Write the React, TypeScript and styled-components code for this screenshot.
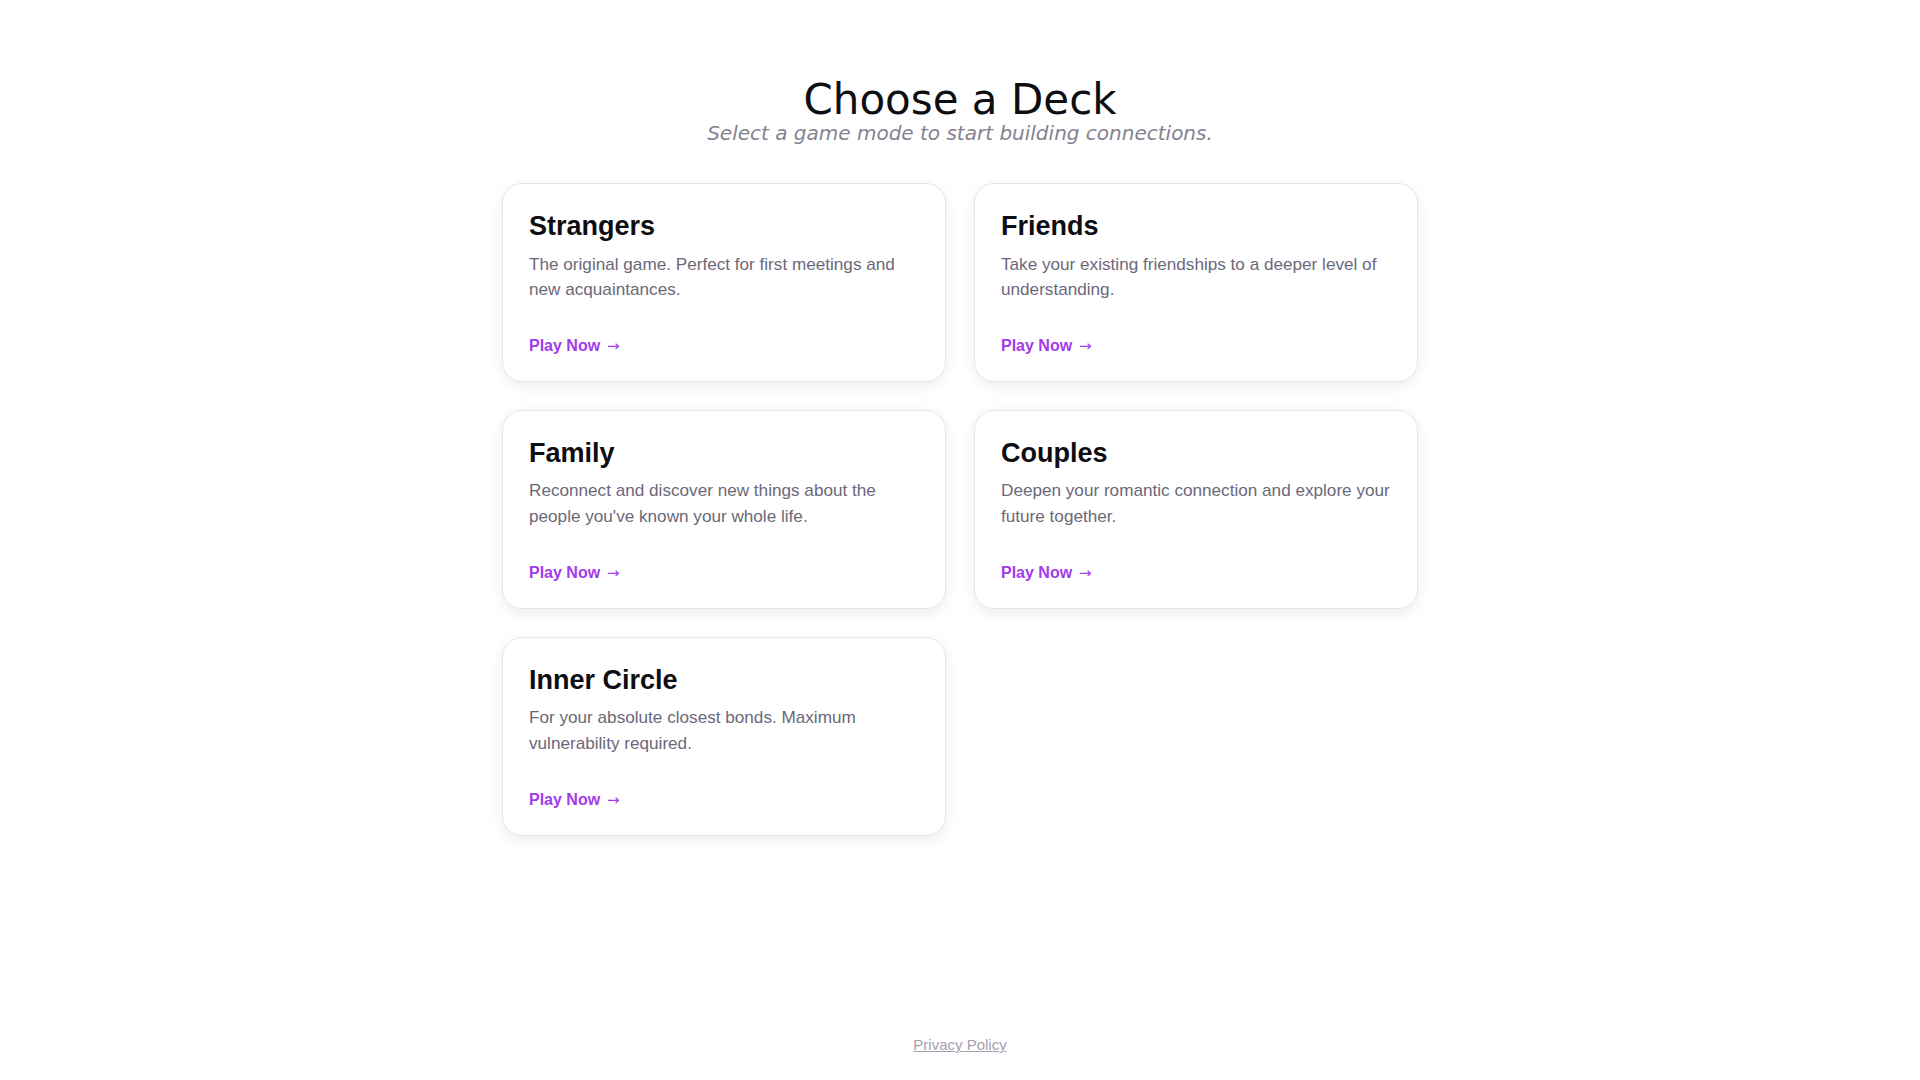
import React from "react";
import styled, { createGlobalStyle } from "styled-components";

const GlobalStyle = createGlobalStyle`
  html, body { margin: 0; padding: 0; background: #ffffff; }
  body { font-family: "Liberation Sans", Arial, sans-serif; }
  * { box-sizing: border-box; }
`;

const Page = styled.div`
  min-height: 100vh;
  display: flex;
  flex-direction: column;
  align-items: center;
`;

const Main = styled.main`
  flex: 1;
  width: 916px;
  padding-top: 78px;
  display: flex;
  flex-direction: column;
  align-items: center;
`;

const Title = styled.h1`
  margin: 0;
  font-family: "DejaVu Sans", sans-serif;
  font-weight: 400;
  font-size: 42px;
  line-height: 44px;
  color: #0d0d12;
`;

const Subtitle = styled.p`
  margin: 0;
  font-family: "DejaVu Sans", sans-serif;
  font-style: italic;
  font-size: 20px;
  line-height: 23px;
  color: #85828f;
`;

const Grid = styled.div`
  width: 100%;
  margin-top: 38px;
  display: grid;
  grid-template-columns: 1fr 1fr;
  gap: 27.5px 28px;
`;

const Card = styled.div`
  background: #ffffff;
  border: 1px solid #e6e5ea;
  border-radius: 20px;
  padding: 27px 26px 26px;
  box-shadow: 0 4px 14px rgba(20, 16, 40, 0.08);
  display: flex;
  flex-direction: column;
`;

const CardTitle = styled.h2`
  margin: 0 0 9.5px;
  font-size: 27px;
  font-weight: 700;
  line-height: 31px;
  color: #0d0d12;
`;

const CardText = styled.p`
  margin: 0 0 34.5px;
  font-size: 17.15px;
  line-height: 25.7px;
  color: #6b6879;
`;

const PlayLink = styled.a`
  font-size: 16px;
  font-weight: 700;
  line-height: 18px;
  color: #a23bec;
  text-decoration: none;
  cursor: pointer;
`;

const Arrow = styled.span`
  margin-left: 2.5px;
  font-family: "DejaVu Sans", sans-serif;
  font-weight: 400;
  font-size: 15px;
`;

const Footer = styled.footer`
  padding: 34px 0 26px;
  text-align: center;
`;

const FooterLink = styled.a`
  font-size: 15px;
  color: #a3a0ad;
  text-decoration: underline;
`;

const decks = [
  { name: "Strangers", text: "The original game. Perfect for first meetings and new acquaintances." },
  { name: "Friends", text: "Take your existing friendships to a deeper level of understanding." },
  { name: "Family", text: "Reconnect and discover new things about the people you've known your whole life." },
  { name: "Couples", text: "Deepen your romantic connection and explore your future together." },
  { name: "Inner Circle", text: "For your absolute closest bonds. Maximum vulnerability required." },
];

export default function App() {
  return (
    <>
      <GlobalStyle />
      <Page>
        <Main>
          <Title>Choose a Deck</Title>
          <Subtitle>Select a game mode to start building connections.</Subtitle>
          <Grid>
            {decks.map((d) => (
              <Card key={d.name}>
                <CardTitle>{d.name}</CardTitle>
                <CardText>{d.text}</CardText>
                <div>
                  <PlayLink>
                    Play Now <Arrow>→</Arrow>
                  </PlayLink>
                </div>
              </Card>
            ))}
          </Grid>
        </Main>
        <Footer>
          <FooterLink href="#">Privacy Policy</FooterLink>
        </Footer>
      </Page>
    </>
  );
}
